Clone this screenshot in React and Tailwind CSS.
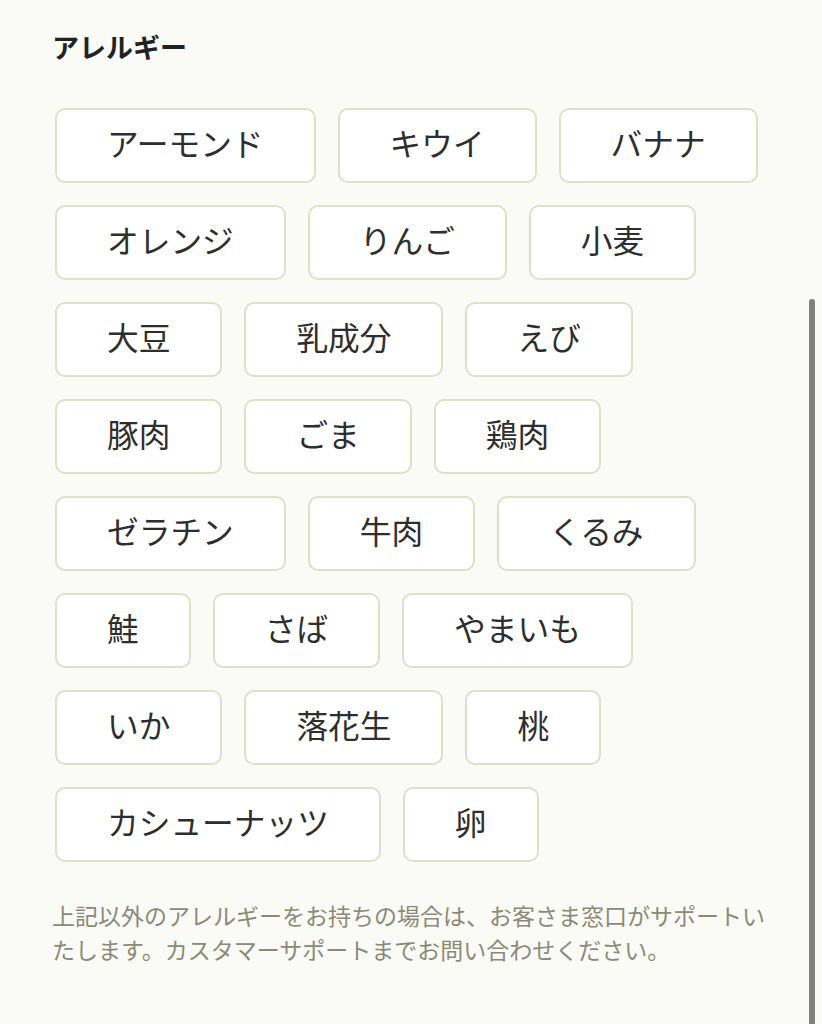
import React from "react";

const allergens = [
  "アーモンド",
  "キウイ",
  "バナナ",
  "オレンジ",
  "りんご",
  "小麦",
  "大豆",
  "乳成分",
  "えび",
  "豚肉",
  "ごま",
  "鶏肉",
  "ゼラチン",
  "牛肉",
  "くるみ",
  "鮭",
  "さば",
  "やまいも",
  "いか",
  "落花生",
  "桃",
  "カシューナッツ",
  "卵",
];

const Chip = ({ label }) => (
  <button
    type="button"
    className="h-[75px] px-[50px] pb-[6px] flex items-center justify-center bg-white border-2 border-[#e0e0c6] rounded-[10px] text-[31.7px] leading-none text-[#2e2e2e]"
  >
    {label}
  </button>
);

export default function App() {
  return (
    <div
      className="relative min-h-[1024px] bg-[#fafaf6] overflow-hidden"
      style={{ fontFamily: '"Noto Sans CJK JP", "Noto Sans", sans-serif' }}
    >
      <div className="pl-[52px] pt-[28px] w-[778px]">
        <h2 className="text-[27px] leading-[38px] font-bold text-[#222]">
          アレルギー
        </h2>

        <div className="mt-[42px] pl-[3px] flex flex-wrap gap-[22px]">
          {allergens.map((a) => (
            <Chip key={a} label={a} />
          ))}
        </div>

        <p className="mt-[36px] text-[23px] leading-[34px] text-[#8b8a76]">
          上記以外のアレルギーをお持ちの場合は、お客さま窓口がサポートいたします。カスタマーサポートまでお問い合わせください。
        </p>
      </div>

      {/* scrollbar */}
      <div className="absolute right-[7px] top-[299px] bottom-0 w-[6px] rounded-t-full bg-[#808080]" />
    </div>
  );
}
